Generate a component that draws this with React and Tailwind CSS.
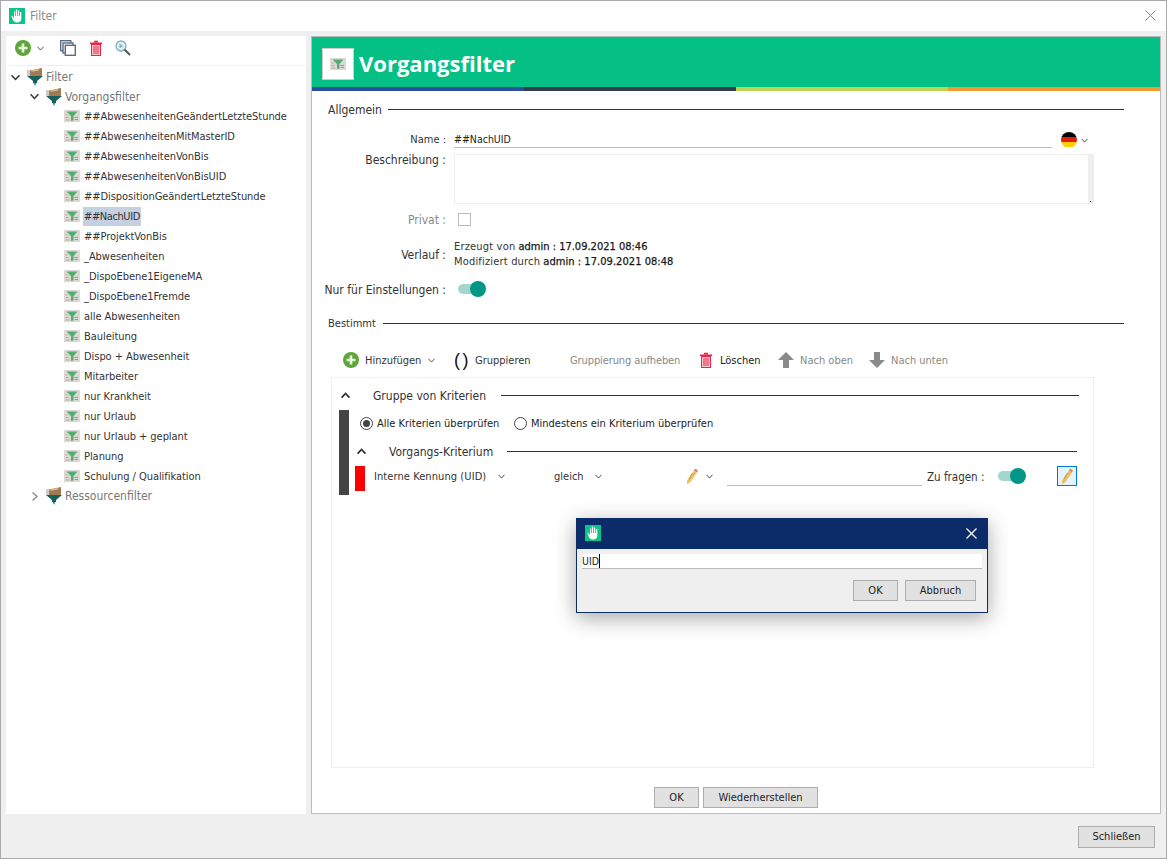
const filters = [
  "##AbwesenheitenGeändertLetzteStunde",
  "##AbwesenheitenMitMasterID",
  "##AbwesenheitenVonBis",
  "##AbwesenheitenVonBisUID",
  "##DispositionGeändertLetzteStunde",
  "##NachUID",
  "##ProjektVonBis",
  "_Abwesenheiten",
  "_DispoEbene1EigeneMA",
  "_DispoEbene1Fremde",
  "alle Abwesenheiten",
  "Bauleitung",
  "Dispo + Abwesenheit",
  "Mitarbeiter",
  "nur Krankheit",
  "nur Urlaub",
  "nur Urlaub + geplant",
  "Planung",
  "Schulung / Qualifikation",
];

function Chevron({ className = "", up = false, size = 7, stroke = 1 }) {
  return (
    <svg width={size} height={size} viewBox="0 0 8 8" className={`shrink-0 ${className}`} fill="none">
      <path d={up ? "M0.5 6L4 2.2L7.5 6" : "M0.5 2L4 5.8L7.5 2"} stroke="#333" strokeWidth={stroke} />
    </svg>
  );
}

function AppIcon() {
  return (
    <svg width="16" height="16" viewBox="0 0 16 16" className="shrink-0">
      <rect width="16" height="16" fill="#0cc48a" />
      <path d="M3 7.500L5 10V3.500H6V8H6.800V1.500H8.200V8H9V2.500H10.200V8H11V4H12.300V10.500C12.300 13 11 14.500 8 14.500C5.500 14.500 4.200 13 3.500 11L2.500 8Z" fill="#fff" />
    </svg>
  );
}

function PlusCircle() {
  return (
    <svg width="16" height="16" viewBox="0 0 16 16" className="shrink-0">
      <circle cx="8" cy="8" r="8" fill="#5fa53a" />
      <path d="M8 3.500V12.500M3.500 8H12.500" stroke="#e8f5e0" strokeWidth="2.600" />
    </svg>
  );
}

function Trash({ className = "" }) {
  return (
    <svg width="12" height="16" viewBox="0 0 12 16" className={`shrink-0 ${className}`} fill="none">
      <path d="M4 1.500H8M0 3.200H12" stroke="#ee2244" strokeWidth="1.500" />
      <rect x="1.500" y="4.500" width="9" height="11" fill="#f8c8d0" stroke="#ee2244" />
      <path d="M4 6V14M6 6V14M8 6V14" stroke="#ee2244" />
    </svg>
  );
}

function FilterDoc() {
  return (
    <svg width="16" height="12" viewBox="0 0 16 12" className="shrink-0">
      <rect width="16" height="12" fill="#dadad6" />
      <path d="M2.500 1.500H13.500L9.500 6V10.500L7 11V6Z" fill="#55ad72" />
      <path d="M1.500 5H3.500M1.500 7.500H4.500M1.500 10H5.500" stroke="#dca27a" />
      <path d="M10.500 7.500H14M10.500 9.500H14" stroke="#999" />
    </svg>
  );
}

function FolderFunnel() {
  return (
    <svg width="16" height="18" viewBox="0 0 16 18" className="shrink-0">
      <path d="M3 2.500L15 0V8H3Z" fill="#a07a55" />
      <path d="M4.500 2.500L12 1V2.500L4.500 3.800Z" fill="#dcc08a" />
      <path d="M0 3H3.500M0 5H3.500M0 7H3.500" stroke="#999" />
      <path d="M0 8H16L10 13V15H6V13Z" fill="#17605b" />
      <path d="M6.500 15H9.500L8 18Z" fill="#2b9bb0" />
    </svg>
  );
}

function Pencil() {
  return (
    <svg width="12" height="16" viewBox="0 0 12 16" className="shrink-0">
      <path d="M8 2.500L11 4.500L4 14.500L1 16L1 12.500Z" fill="#e8c060" />
      <path d="M6.500 5L3 11" stroke="#c9973a" />
      <path d="M9 0.500L12 2.500L11 4.500L8 2.500Z" fill="#d9806a" />
    </svg>
  );
}

function Arrow({ down = false }) {
  return (
    <svg width="16" height="16" viewBox="0 0 16 16" className="shrink-0">
      <path d={down ? "M5 0H11V8H16L8 16L0 8H5Z" : "M8 0L16 8H11V16H5V8H0Z"} fill="#8a8a8a" />
    </svg>
  );
}

function Toggle() {
  return (
    <div className="relative w-[28px] h-[16px] shrink-0 flex items-center">
      <div className="w-[22px] h-[10px] rounded-full bg-[#a5d5cf]" />
      <div className="absolute right-0 top-0 w-[16px] h-[16px] rounded-full bg-[#009688]" />
    </div>
  );
}

function Heading({ label, className = "", textClass = "" }) {
  return (
    <div className={`flex items-center h-[16px] ${className}`}>
      <span className={`mt-[2px] text-[#333] ${textClass}`}>{label}</span>
      <div className="flex-1 h-px bg-[#333]" />
    </div>
  );
}

function Label({ children, className = "text-[#333] text-[12px]" }) {
  return <div className={`w-[134px] shrink-0 text-right ${className}`}>{children}</div>;
}

function Button({ children, className = "" }) {
  return (
    <div className={`h-[21px] flex items-center justify-center bg-[#e1e1e1] border border-[#adadad] text-[#222] ${className}`}>
      {children}
    </div>
  );
}

export default function App() {
  return (
    <div className="relative w-[1167px] h-[859px] overflow-hidden flex flex-col bg-[#efefef] border border-[#aaa] font-['DejaVu_Sans_Condensed','DejaVu_Sans',sans-serif] text-[11px] leading-[14px] text-[#333]">
      <div className="h-[30px] shrink-0 bg-white flex items-center pl-[8px] pr-[10px]">
        <AppIcon />
        <span className="ml-[5px] text-[12px] text-[#8a8a8a]">Filter</span>
        <svg width="11" height="11" viewBox="0 0 11 11" className="ml-auto mb-[2px]" fill="none">
          <path d="M0.500 0.500L10.500 10.500M10.500 0.500L0.500 10.500" stroke="#888" />
        </svg>
      </div>

      <div className="flex mt-[5px] ml-[5px] gap-[5px]">
        <div className="w-[300px] h-[778px] bg-white shrink-0">
          <div className="h-[29px] flex items-start pt-[4px] pl-[9px]">
            <PlusCircle />
            <Chevron className="ml-[6px] mt-[5px]" />
            <svg width="16" height="16" viewBox="0 0 16 16" className="ml-[16px] shrink-0" fill="#fff" stroke="#5a6b85" strokeWidth="1.400">
              <rect x="0.700" y="0.700" width="10" height="10" />
              <rect x="3" y="3" width="10" height="10" />
              <rect x="5.300" y="5.300" width="10" height="10" />
            </svg>
            <Trash className="ml-[14px]" />
            <svg width="16" height="16" viewBox="0 0 16 16" className="ml-[13px] shrink-0" fill="none">
              <circle cx="6" cy="6" r="5" fill="#dceef2" stroke="#7fb2c0" strokeWidth="1.300" />
              <path d="M4.500 3.500L8 6L4.500 8.500Z" fill="#7fb2c0" />
              <path d="M9.500 9.500L15 15" stroke="#555" strokeWidth="2" />
            </svg>
          </div>
          <div className="border-t border-[#eee] mx-px pt-px">
            <div className="h-[20px] flex items-center pl-[4px]">
              <Chevron size={9} stroke={1.3} />
              <span className="ml-[7px] flex"><FolderFunnel /></span>
              <span className="ml-[3px] text-[#777] text-[12px]">Filter</span>
            </div>
            <div className="h-[19px] flex items-center pl-[23px]">
              <Chevron size={9} stroke={1.3} />
              <span className="ml-[7px] flex"><FolderFunnel /></span>
              <span className="ml-[3px] text-[#777] text-[12px]">Vorgangsfilter</span>
            </div>
            {filters.map((name) => (
              <div key={name} className="h-[20px] flex items-center pl-[57px]">
                <FilterDoc />
                <span className={`ml-[3px] px-px leading-[19px] ${name === "##NachUID" ? "bg-[#c5d0e0] tracking-[-0.4px]" : "tracking-[-0.05px]"}`}>{name}</span>
              </div>
            ))}
            <div className="h-[20px] flex items-center pl-[23px]">
              <svg width="9" height="9" viewBox="0 0 9 9" fill="none" className="shrink-0">
                <path d="M2.500 0.500L7 4.500L2.500 8.500" stroke="#888" strokeWidth="1.300" />
              </svg>
              <span className="ml-[7px] flex"><FolderFunnel /></span>
              <span className="ml-[3px] text-[#777] text-[12px]">Ressourcenfilter</span>
            </div>
          </div>
        </div>

        <div className="w-[850px] h-[778px] shrink-0 bg-white border border-[#bbb] flex flex-col">
          <div className="h-[50px] shrink-0 bg-[#04c084] flex items-center pl-[10px] pt-[4px]">
            <div className="w-[32px] h-[32px] bg-white border border-[#ccc] flex items-center justify-center">
              <FilterDoc />
            </div>
            <h1 className="ml-[5px] text-[22px] leading-[32px] font-bold text-white font-['Open_Sans',sans-serif] mt-[-2px]">Vorgangsfilter</h1>
          </div>
          <div className="grid grid-cols-4 h-[4px] shrink-0">
            <div className="bg-[#2a4f9c]" />
            <div className="bg-[#2c3e50]" />
            <div className="bg-[#b8d652]" />
            <div className="bg-[#f59a33]" />
          </div>

          <Heading label="Allgemein" textClass="w-[60px] text-[12px]" className="mt-[10px] ml-[16px] mr-[36px]" />

          <div className="flex items-center h-[17px] mt-[14px]">
            <Label className="text-[#333] text-[11px]">Name :</Label>
            <div className="ml-[8px] w-[598px] h-[17px] border-b border-[#bbb] text-[#222] text-[10.500px] flex items-center pb-px">##NachUID</div>
            <div className="ml-[9px] w-[16px] h-[16px] rounded-full overflow-hidden flex flex-col shrink-0">
              <div className="flex-1 bg-black" />
              <div className="flex-1 bg-[#dd1f0f]" />
              <div className="flex-1 bg-[#ffce00]" />
            </div>
            <Chevron className="ml-[4px] mt-[2px]" />
          </div>

          <div className="flex mt-[6px]">
            <Label className="text-[#333] text-[12px] mt-[-1px]">Beschreibung :</Label>
            <div className="ml-[8px] w-[640px] h-[50px] border border-[#eee] flex justify-end">
              <div className="w-[5px] h-full bg-[#efefef] flex items-end justify-center pb-[1px]">
                <div className="w-[1px] h-[1px] bg-[#333]" />
              </div>
            </div>
          </div>

          <div className="flex items-center h-[16px] mt-[7px]">
            <Label className="text-[#888] text-[12px] mt-[2px]">Privat :</Label>
            <div className="ml-[12px] w-[13px] h-[13px] border border-[#bbb] bg-white" />
          </div>

          <div className="flex items-center h-[30px] mt-[12px]">
            <Label className="text-[#333] text-[12px] mt-[2px]">Verlauf :</Label>
            <div className="ml-[8px] leading-[15px]">
              <div><span className="tracking-[0.18px]">Erzeugt von</span> <span className="text-[#111] [-webkit-text-stroke:0.25px_#222]">admin : 17.09.2021 08:46</span></div>
              <div><span className="tracking-[0.18px]">Modifiziert durch</span> <span className="text-[#111] tracking-[0.05px] [-webkit-text-stroke:0.25px_#222]">admin : 17.09.2021 08:48</span></div>
            </div>
          </div>

          <div className="flex items-center h-[16px] mt-[12px]">
            <Label className="text-[#333] text-[12px] mt-[2px]">Nur für Einstellungen :</Label>
            <div className="ml-[12px]"><Toggle /></div>
          </div>

          <Heading label="Bestimmt" textClass="w-[55px]" className="mt-[18px] ml-[16px] mr-[36px]" />

          <div className="flex items-center h-[20px] mt-[19px] pl-[31px]">
            <PlusCircle />
            <span className="ml-[6px] w-[63px] mt-[2px]">Hinzufügen</span>
            <Chevron />
            <span className="ml-[19px] w-[21px] text-[18px] leading-[20px] text-[#111] tracking-[2.500px] font-['Liberation_Sans',sans-serif]">()</span>
            <span className="w-[95px] mt-[2px]">Gruppieren</span>
            <span className="w-[130px] text-[#888] mt-[2px] tracking-[-0.1px]">Gruppierung aufheben</span>
            <Trash />
            <span className="ml-[8px] w-[58px] mt-[2px] text-[#222]">Löschen</span>
            <Arrow />
            <span className="ml-[6px] w-[69px] text-[#888] mt-[2px]">Nach oben</span>
            <Arrow down />
            <span className="ml-[6px] text-[#888] mt-[2px]">Nach unten</span>
          </div>

          <div className="ml-[19px] mt-[7px] w-[763px] h-[391px] border border-[#eee] shrink-0">
            <div className="flex items-center h-[16px] mt-[9px] pl-[9px] pr-[14px]">
              <Chevron up size={9} stroke={1.6} />
              <span className="ml-[23px] w-[128px] mt-[2px] text-[12px]">Gruppe von Kriterien</span>
              <div className="flex-1 h-px bg-[#333]" />
            </div>

            <div className="flex mt-[7px] ml-[7px]">
              <div className="w-[10px] h-[85px] bg-[#444] shrink-0" />
              <div className="flex-1 pl-[6px] pr-[18px]">
                <div className="flex items-center h-[16px] mt-[5px] pl-[5px]">
                  <div className="w-[13px] h-[13px] rounded-full border border-[#444] flex items-center justify-center">
                    <div className="w-[7px] h-[7px] rounded-full bg-[#444]" />
                  </div>
                  <span className="ml-[4px] w-[137px] text-[#222] mt-[2px]">Alle Kriterien überprüfen</span>
                  <div className="w-[13px] h-[13px] rounded-full border border-[#444]" />
                  <span className="ml-[4px] text-[#222] mt-[2px]">Mindestens ein Kriterium überprüfen</span>
                </div>

                <div className="flex items-center h-[16px] mt-[12px] pl-[2px]">
                  <Chevron up size={9} stroke={1.6} />
                  <span className="ml-[23px] w-[118px] mt-[2px] text-[12px]">Vorgangs-Kriterium</span>
                  <div className="flex-1 h-px bg-[#333]" />
                </div>

                <div className="flex items-start h-[25px] mt-[7px]">
                  <div className="w-[10px] h-[25px] bg-[#f00] shrink-0" />
                  <div className="flex items-center h-[20px] flex-1">
                    <div className="ml-[9px] w-[180px] flex items-center">
                      <span className="w-[124px] mt-[2px] tracking-[0.08px]">Interne Kennung (UID)</span>
                      <Chevron />
                    </div>
                    <div className="w-[132px] flex items-center">
                      <span className="w-[41px] mt-[2px]">gleich</span>
                      <Chevron />
                    </div>
                    <Pencil />
                    <Chevron className="ml-[8px]" />
                    <div className="ml-[14px] w-[195px] h-[20px] border-b border-[#bbb]" />
                    <span className="ml-[5px] w-[71px] mt-[2px] text-[11.500px]">Zu fragen :</span>
                    <Toggle />
                    <div className="ml-[31px] w-[20px] h-[20px] bg-[#e5f1fb] border border-[#0078d7] flex items-center justify-center">
                      <Pencil />
                    </div>
                  </div>
                </div>
              </div>
            </div>
          </div>

          <div className="flex mt-[19px] pl-[342px] gap-[4px]">
            <Button className="w-[45px]">OK</Button>
            <Button className="w-[115px]">Wiederherstellen</Button>
          </div>
        </div>
      </div>

      <div className="flex justify-end mt-[12px] pr-[11px]">
        <Button className="w-[77px] h-[22px]">Schließen</Button>
      </div>

      <div className="absolute left-[575px] top-[517px] w-[412px] h-[95px] bg-[#efefef] border border-[#0c2c69] shadow-[0_5px_20px_rgba(0,0,0,0.35)] flex flex-col">
        <div className="h-[30px] shrink-0 bg-[#0c2c69] flex items-center pl-[8px] pr-[10px] pb-[2px]">
          <AppIcon />
          <svg width="11" height="11" viewBox="0 0 11 11" className="ml-auto" fill="none">
            <path d="M0.500 0.500L10.500 10.500M10.500 0.500L0.500 10.500" stroke="#fff" strokeWidth="1.300" />
          </svg>
        </div>
        <div className="mx-[5px] mt-[5px] h-[15px] bg-white border-b border-[#bbb] flex items-center text-[#222] text-[10.500px]">
          UID<span className="w-px h-[14px] bg-black" />
        </div>
        <div className="flex justify-end gap-[7px] mt-[11px] pr-[11px]">
          <Button className="w-[45px]">OK</Button>
          <Button className="w-[71px]">Abbruch</Button>
        </div>
      </div>
    </div>
  );
}
